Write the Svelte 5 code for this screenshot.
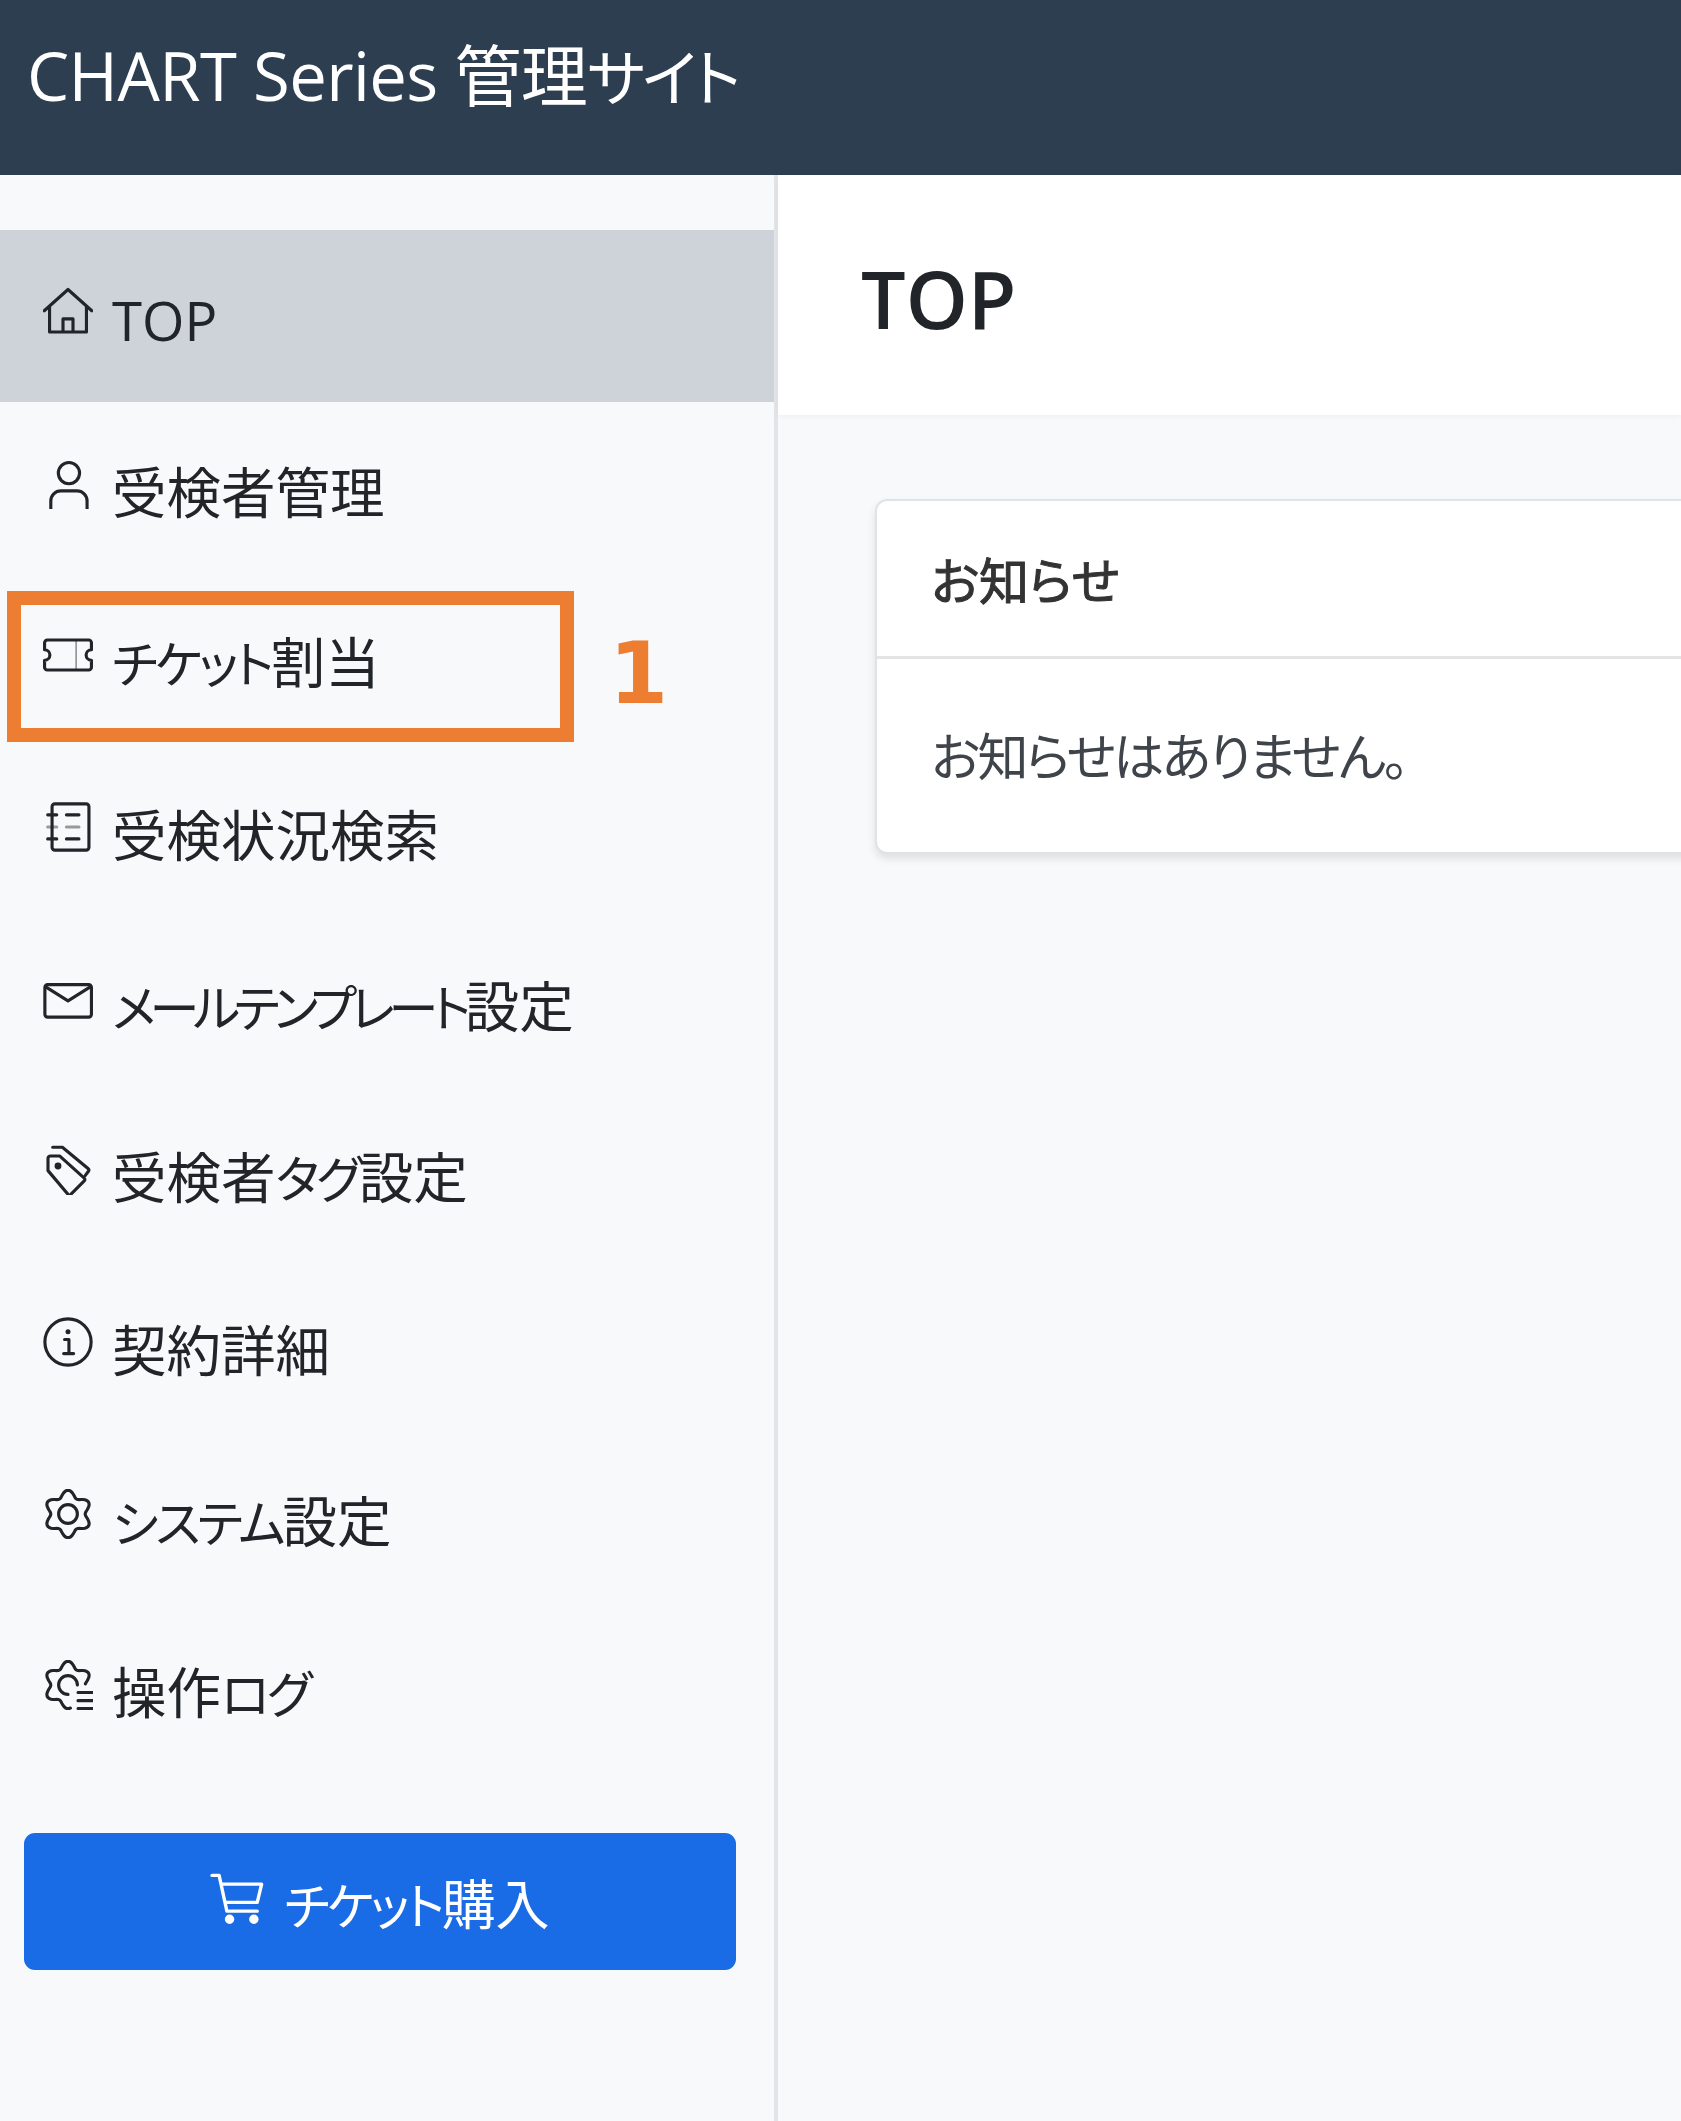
<script lang="ts">
	const gearPoint = (deg: number) => {
		const a = (deg * Math.PI) / 180;
		const r = 6.55 + 1.05 * Math.cos(6 * (a + Math.PI / 2));
		return `${(8 + r * Math.cos(a)).toFixed(2)} ${(8 + r * Math.sin(a)).toFixed(2)}`;
	};

	const gearPath = (from: number, to: number) => {
		const points = [];
		for (let d = from; d <= to; d += 4) points.push(gearPoint(d));
		return 'M' + points.join('L');
	};

	// katakana runs are set narrower than kanji, as in the original UI font
	const runs = (text: string) =>
		text
			.split(/([\u30a0-\u30ff]+)/)
			.filter(Boolean)
			.map((t) => ({ t, kana: /[\u30a0-\u30ff]/.test(t) }));

	const items = [
		{ icon: 'house', label: 'TOP', active: true },
		{ icon: 'person', label: '受検者管理' },
		{ icon: 'ticket', label: 'チケット割当' },
		{ icon: 'journal', label: '受検状況検索' },
		{ icon: 'mail', label: 'メールテンプレート設定', tight: true },
		{ icon: 'tags', label: '受検者タグ設定' },
		{ icon: 'info', label: '契約詳細' },
		{ icon: 'gear', label: 'システム設定' },
		{ icon: 'log', label: '操作ログ' }
	];
</script>

{#snippet narrow(text)}
	{#each runs(text) as run}{#if run.kana}<span class="kana">{run.t}</span>{:else}{run.t}{/if}{/each}
{/snippet}

{#snippet icon(name)}
	<svg class="icon" viewBox="0 0 16 16" fill="none" stroke="currentColor" stroke-width="1" stroke-linecap="round" stroke-linejoin="round" aria-hidden="true">
		{#if name === 'house'}
			<path d="M0.4 7.6 8 0.8l7.6 6.8M2.1 6.3V14.4H13.9V6.3M6.4 14.4V10.2H9.6V14.4" />
		{:else if name === 'person'}
			<circle cx="8.3" cy="4.5" r="3.4" />
			<path d="M2.5 16v-2.6a3.2 3.2 0 0 1 3.2-3.2h5.2a3.2 3.2 0 0 1 3.2 3.2V16" />
		{:else if name === 'ticket'}
			<path d="M1.4 3.2h13.2a.9.9 0 0 1 .9.9v2.2a1.7 1.7 0 0 0 0 3.4v2.2a.9.9 0 0 1-.9.9H1.4a.9.9 0 0 1-.9-.9V9.7a1.7 1.7 0 0 0 0-3.4V4.1a.9.9 0 0 1 .9-.9z" />
			<path d="M10.6 3.6v9" stroke-width="0.5" opacity="0.5" />
		{:else if name === 'journal'}
			<rect x="2.9" y="0.6" width="11.8" height="14.8" rx="0.9" />
			<path d="M1.5 4.1h2.9M1.5 11.8h2.9M7.5 4.1h4M7.5 11.8h4" />
			<path d="M1.5 8h2.9M7.5 8h4" opacity="0.45" />
		{:else if name === 'mail'}
			<rect x="0.6" y="3.4" width="14.9" height="10.4" rx="0.9" />
			<path d="M1 4.2 8 8.6l7-4.4" />
		{:else if name === 'tags'}
			<path d="M2.4 3.5h2.9L13.2 10.6a.6.6 0 0 1 0 .9L8.9 15.8a.6.6 0 0 1-.9 0L1.6 8.2V4.3a.8.8 0 0 1 .8-.8z" />
			<path d="M3.1.7h3.1L14.5 7.6a.5.5 0 0 1 .1.7L13.5 9.8" />
			<circle cx="4.8" cy="6.7" r="0.6" fill="currentColor" />
		{:else if name === 'info'}
			<circle cx="8" cy="8" r="7.4" />
			<circle cx="8" cy="4.7" r="0.8" fill="currentColor" stroke="none" />
			<path d="M6.9 7.2H8.3V11.6M6.6 11.7h3.2" />
		{:else if name === 'gear'}
			<path d={gearPath(0, 360)} />
			<circle cx="8" cy="8" r="3" />
		{:else if name === 'log'}
			<path d={gearPath(84, 356)} />
			<path d="M8 11a3 3 0 1 1 3-3" />
			<path d="M11.2 10.4H16M11.2 13H16M11.2 15.5H16" />
		{/if}
	</svg>
{/snippet}

<div class="page">
	<header class="topbar">{@render narrow('CHART Series 管理サイト')}</header>

	<div class="body">
		<aside class="sidebar">
			<nav>
				{#each items as item}
					<a class="item" class:active={item.active} href="#top">
						{@render icon(item.icon)}
						<span class="label" class:tight={item.tight}>{@render narrow(item.label)}</span>
					</a>
				{/each}
			</nav>
			<button class="buy" type="button">
				<svg class="cart" viewBox="0 0 16 16" fill="none" stroke="currentColor" stroke-width="1" stroke-linecap="round" stroke-linejoin="round" aria-hidden="true">
					<path d="M.6 1H2.7L5 11.6H14M3.4 3.6H15.3L14 9H4.5" />
					<circle cx="5.8" cy="14" r="0.9" fill="currentColor" />
					<circle cx="13" cy="14" r="0.9" fill="currentColor" />
				</svg>
				<span>{@render narrow('チケット購入')}</span>
			</button>
		</aside>

		<main class="main">
			<div class="titlebar"><h1>TOP</h1></div>
			<div class="content">
				<section class="card">
					<h2>お知らせ</h2>
					<p>お知らせはありません。</p>
				</section>
			</div>
		</main>
	</div>

	<div class="callout"></div>
	<div class="callout-number">1</div>
</div>

<style>
	:global(body) {
		margin: 0;
	}

	.page {
		position: relative;
		width: 1681px;
		height: 2121px;
		overflow: hidden;
		display: flex;
		flex-direction: column;
		background: #f8f9fa;
		color: #212529;
		font-family: 'Open Sans', 'Noto Sans CJK JP', sans-serif;
		font-feature-settings: 'palt';
	}

	.kana {
		font-size: 0.92em;
		letter-spacing: -0.06em;
	}

	.topbar .kana {
		letter-spacing: -0.05em;
	}

	.tight .kana {
		letter-spacing: -0.12em;
	}

	.topbar {
		flex: none;
		height: 175px;
		box-sizing: border-box;
		padding: 36px 0 0 27px;
		background: #2c3e50;
		color: #fff;
		font-size: 67px;
		line-height: 78px;
		letter-spacing: -0.6px;
		font-weight: 400;
	}

	.body {
		flex: 1;
		display: flex;
		min-height: 0;
	}

	.sidebar {
		flex: none;
		width: 778px;
		box-sizing: border-box;
		padding-top: 55px;
		background: #f8f9fa;
		border-right: 4px solid #e2e5e8;
	}

	.item {
		display: flex;
		align-items: center;
		height: 171.7px;
		padding-left: 43px;
		color: #212529;
		text-decoration: none;
	}

	.item.active {
		background: #ced3da;
	}

	.icon {
		flex: none;
		width: 50px;
		height: 50px;
		margin-top: -8px;
	}

	.label {
		margin: 8px 0 0 19px;
		font-size: 54.5px;
		line-height: 70px;
		font-weight: 400;
	}

	.buy {
		display: flex;
		align-items: center;
		justify-content: center;
		gap: 20px;
		width: 712px;
		height: 137px;
		margin: 58px 0 0 24px;
		padding: 0;
		border: none;
		border-radius: 11px;
		background: #1a6be6;
		color: #fff;
		font: inherit;
		font-size: 54px;
		font-weight: 400;
	}

	.cart {
		width: 54px;
		height: 54px;
		margin-top: -6px;
	}

	.main {
		flex: 1;
		min-width: 0;
	}

	.titlebar {
		height: 240px;
		box-sizing: border-box;
		padding: 69px 0 0 83px;
		background: #fff;
		box-shadow: 0 2px 6px rgba(0, 0, 0, 0.04);
	}

	h1 {
		margin: 0;
		font-size: 79px;
		line-height: 110px;
		font-weight: 600;
	}

	.content {
		padding: 84px 0 0 97px;
	}

	.card {
		margin-right: -40px;
		height: 355px;
		box-sizing: border-box;
		background: #fff;
		border: 2px solid #e0e2e5;
		border-radius: 12px;
		box-shadow: 0 5px 9px rgba(0, 0, 0, 0.1);
	}

	h2 {
		margin: 0;
		height: 158px;
		box-sizing: border-box;
		padding: 46px 0 0 54px;
		border-bottom: 3px solid #e3e4e6;
		font-size: 50px;
		line-height: 68px;
		font-weight: 400;
		-webkit-text-stroke: 1px currentColor;
		color: #333;
	}

	p {
		margin: 0;
		padding: 63px 0 0 54px;
		font-size: 51px;
		line-height: 68px;
		letter-spacing: -2.5px;
		font-weight: 400;
		color: #3f444a;
	}

	.callout {
		position: absolute;
		left: 7px;
		top: 591px;
		width: 567px;
		height: 151px;
		box-sizing: border-box;
		border: 14px solid #ed7d31;
	}

	.callout-number {
		position: absolute;
		left: 609px;
		top: 619px;
		font-family: 'DejaVu Sans', sans-serif;
		font-size: 85px;
		line-height: 110px;
		font-weight: 700;
		color: #ed7d31;
	}
</style>
